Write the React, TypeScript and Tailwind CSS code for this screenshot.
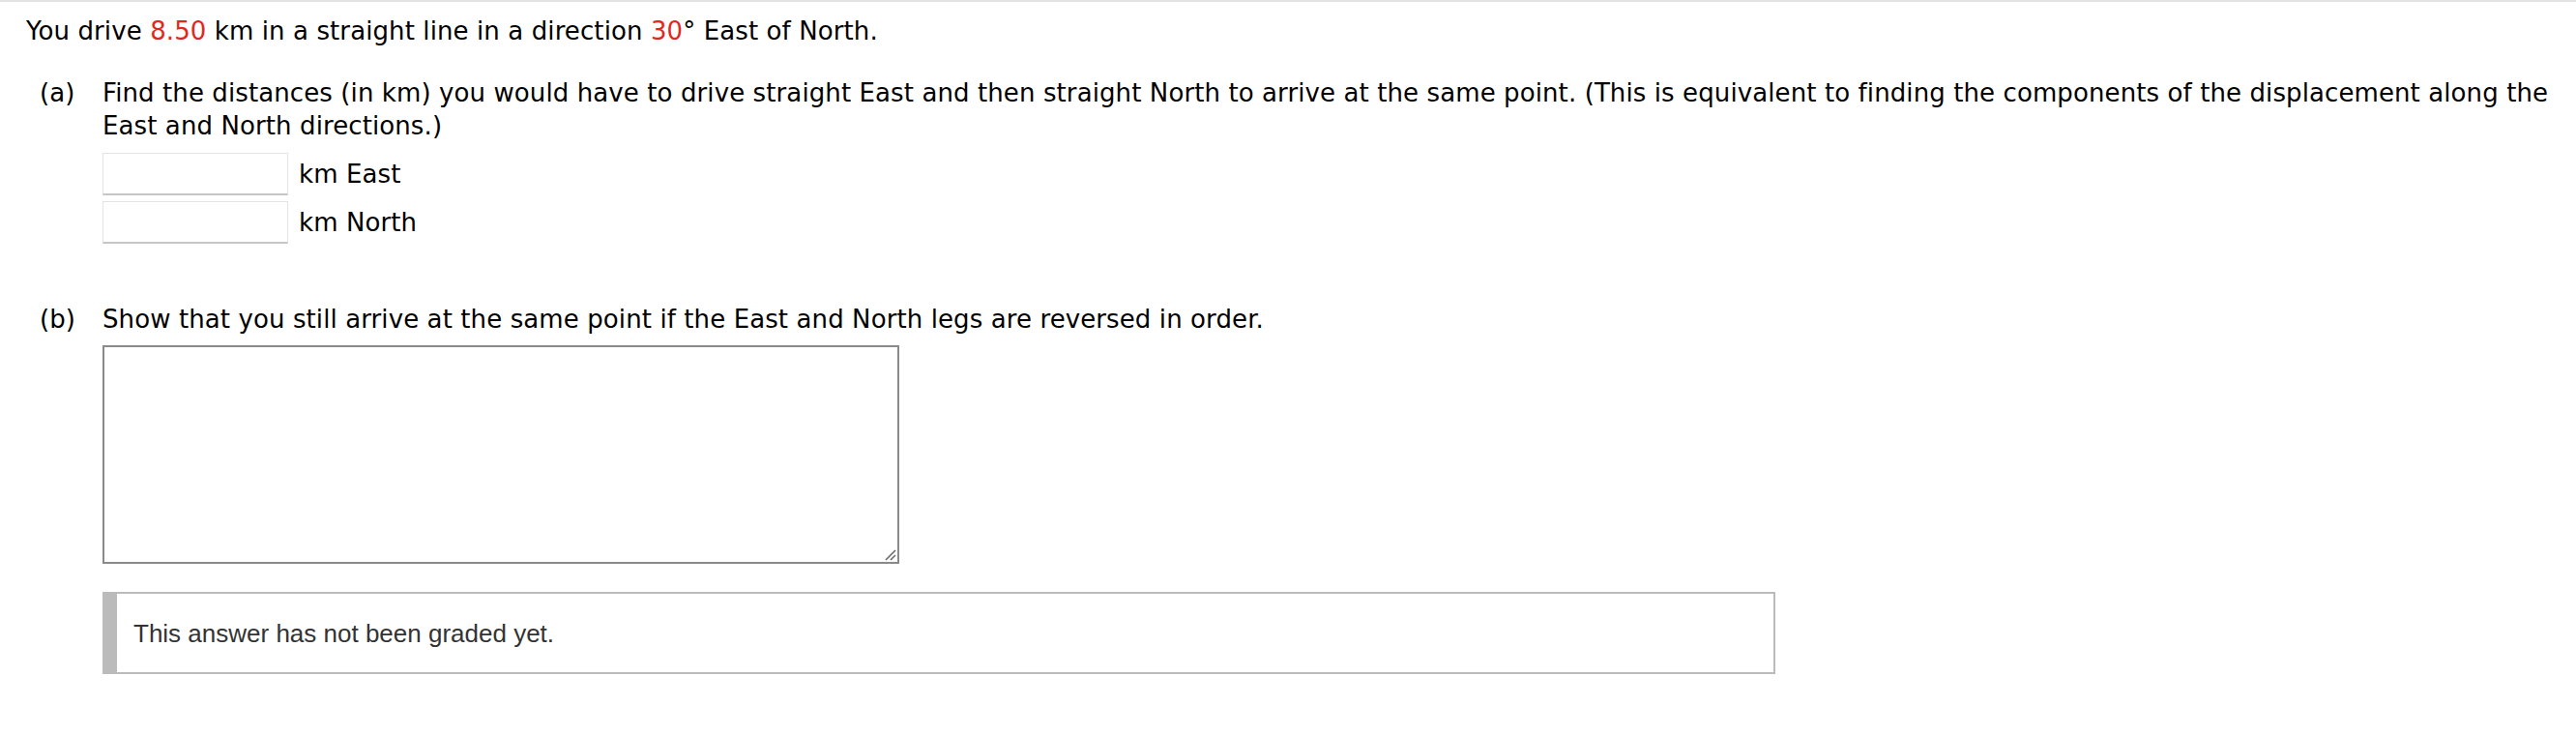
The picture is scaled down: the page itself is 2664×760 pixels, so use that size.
import React from 'react';

const Red = ({ children }: { children: React.ReactNode }) => (
  <span className="text-[#e2281c]">{children}</span>
);

const AnswerInput = ({ unit }: { unit: string }) => (
  <div className="flex items-center gap-[11px]">
    <input
      type="text"
      className="w-[192px] h-[44px] bg-white border border-[#e4e4e4] border-b-2 border-b-[#c6c6c6] outline-none"
    />
    <span>{unit}</span>
  </div>
);

export default function App() {
  return (
    <div className="min-h-[760px] bg-white text-black text-[26px] tracking-[0.1px] font-['DejaVu_Sans',Verdana,sans-serif]">
      <div className="h-[2px] bg-[#e3e3e3]" />

      {/* ── Question stem ── */}
      <div className="pl-[27px] pt-[14px] leading-[32px]">
        You drive <Red>8.50</Red> km in a straight line in a direction <Red>30</Red>° East of North.
      </div>

      {/* ── Part (a) ── */}
      <div className="flex pl-[41px] pr-[6px] mt-[31px] leading-[34px]">
        <span className="w-[65px] shrink-0">(a)</span>
        <div className="flex-1">
          <p>
            Find the distances (in km) you would have to drive straight East and then straight North to
            arrive at the same point. (This is equivalent to finding the components of the displacement
            along the East and North directions.)
          </p>
          <div className="flex flex-col gap-[6px] mt-[11px]">
            <AnswerInput unit="km East" />
            <AnswerInput unit="km North" />
          </div>
        </div>
      </div>

      {/* ── Part (b) ── */}
      <div className="flex pl-[41px] pr-[6px] mt-[61px] leading-[34px]">
        <span className="w-[65px] shrink-0">(b)</span>
        <div className="flex-1">
          <p>Show that you still arrive at the same point if the East and North legs are reversed in order.</p>

          <div className="relative w-[824px] h-[226px] mt-[10px]">
            <textarea className="block w-full h-full resize-none bg-white border-2 border-[#8a8a8a] outline-none" />
            {/* resize grip */}
            <svg
              className="absolute right-[3px] bottom-[3px]"
              width="14"
              height="14"
              viewBox="0 0 14 14"
            >
              <line x1="3" y1="13" x2="13" y2="3" stroke="#6b6b6b" strokeWidth="1.6" />
              <line x1="8" y1="13" x2="13" y2="8" stroke="#6b6b6b" strokeWidth="1.6" />
            </svg>
          </div>

          <div className="flex items-center w-[1730px] h-[85px] mt-[29px] border-2 border-l-[15px] border-[#bbbbbb] bg-white pl-[17px]">
            <span className="font-['Liberation_Sans',Arial,sans-serif] text-[26px] tracking-normal text-[#333333]">
              This answer has not been graded yet.
            </span>
          </div>
        </div>
      </div>
    </div>
  );
}
